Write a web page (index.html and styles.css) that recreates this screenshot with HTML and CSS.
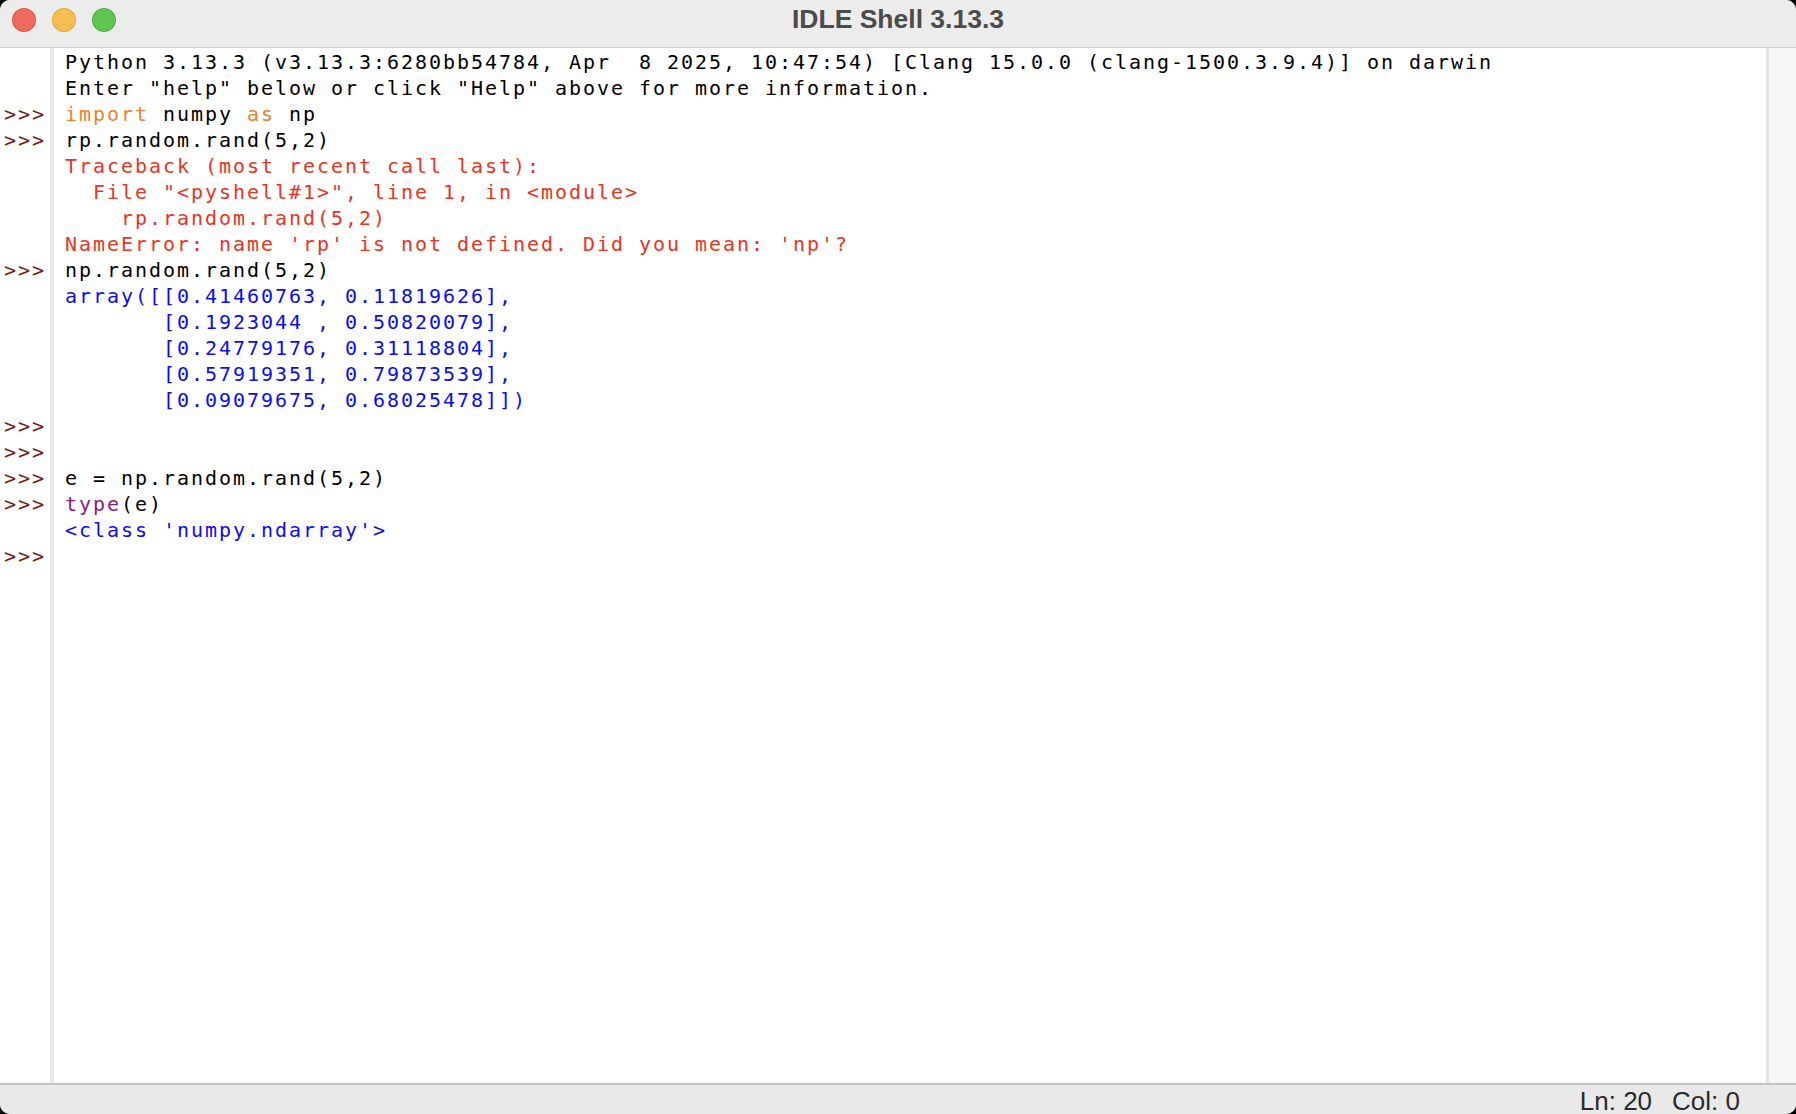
FILE: index.html
```html
<html lang="en">
	<head>
		<meta charset="UTF-8" />
		<title>IDLE Shell 3.13.3</title>
		<link rel="stylesheet" href="styles.css">
	</head>

	<body>
		<div class="window">
			<div class="titlebar">
				<div class="lights">
					<span class="light red"></span>
					<span class="light yellow"></span>
					<span class="light green"></span>
				</div>
				<div class="title">IDLE Shell 3.13.3</div>
				<div></div>
			</div>

			<div class="main">
				<div class="gutter">
					<div class="line"></div>
					<div class="line"></div>
					<div class="line">&gt;&gt;&gt;</div>
					<div class="line">&gt;&gt;&gt;</div>
					<div class="line"></div>
					<div class="line"></div>
					<div class="line"></div>
					<div class="line"></div>
					<div class="line">&gt;&gt;&gt;</div>
					<div class="line"></div>
					<div class="line"></div>
					<div class="line"></div>
					<div class="line"></div>
					<div class="line"></div>
					<div class="line">&gt;&gt;&gt;</div>
					<div class="line">&gt;&gt;&gt;</div>
					<div class="line">&gt;&gt;&gt;</div>
					<div class="line">&gt;&gt;&gt;</div>
					<div class="line"></div>
					<div class="line">&gt;&gt;&gt;</div>
				</div>

				<div class="code">
					<div class="line">Python 3.13.3 (v3.13.3:6280bb54784, Apr  8 2025, 10:47:54) [Clang 15.0.0 (clang-1500.3.9.4)] on darwin</div>
					<div class="line">Enter "help" below or click "Help" above for more information.</div>
					<div class="line"><span class="kw">import</span> numpy <span class="kw">as</span> np</div>
					<div class="line">rp.random.rand(5,2)</div>
					<div class="line err">Traceback (most recent call last):</div>
					<div class="line err">  File "&lt;pyshell#1&gt;", line 1, in &lt;module&gt;</div>
					<div class="line err">    rp.random.rand(5,2)</div>
					<div class="line err">NameError: name 'rp' is not defined. Did you mean: 'np'?</div>
					<div class="line">np.random.rand(5,2)</div>
					<div class="line out">array([[0.41460763, 0.11819626],</div>
					<div class="line out">       [0.1923044 , 0.50820079],</div>
					<div class="line out">       [0.24779176, 0.31118804],</div>
					<div class="line out">       [0.57919351, 0.79873539],</div>
					<div class="line out">       [0.09079675, 0.68025478]])</div>
					<div class="line"></div>
					<div class="line"></div>
					<div class="line">e = np.random.rand(5,2)</div>
					<div class="line"><span class="builtin">type</span>(e)</div>
					<div class="line out">&lt;class 'numpy.ndarray'&gt;</div>
					<div class="line"></div>
				</div>

				<div class="scrollbar"></div>
			</div>

			<div class="status">
				<span>Ln: 20</span>
				<span>Col: 0</span>
			</div>
		</div>
	</body>
</html>
```

FILE: styles.css
```css
html {
	background: #000;
}

body {
	margin: 0;
	padding: 0;
	height: 100vh;
	overflow: hidden;
}

.window {
	display: flex;
	flex-direction: column;
	height: 100%;
	background: #fff;
	border-radius: 10px;
	overflow: hidden;
}

.titlebar {
	display: grid;
	grid-template-columns: 1fr auto 1fr;
	align-items: center;
	height: 47px;
	flex-shrink: 0;
	background: #ececec;
	border-bottom: 1px solid #d4d4d4;
}

.lights {
	display: flex;
	gap: 16px;
	padding-left: 12px;
	margin-top: -7px;
}

.light {
	width: 22px;
	height: 22px;
	border-radius: 50%;
	border: 1px solid rgba(0, 0, 0, 0.12);
}

.red {
	background: #ee6a5f;
}

.yellow {
	background: #f5bf4f;
}

.green {
	background: #61c554;
}

.title {
	font-family: 'Liberation Sans', Arial, sans-serif;
	font-weight: bold;
	font-size: 26.5px;
	color: #4b4b4b;
	margin-top: -8px;
}

.main {
	display: flex;
	flex: 1;
	min-height: 0;
	font-family: 'DejaVu Sans Mono', monospace;
	font-size: 20px;
	letter-spacing: 1.96px;
	line-height: 26px;
}

.gutter {
	width: 46px;
	padding-left: 4px;
	padding-top: 1px;
	border-right: 4px solid #e8e8e8;
	color: #7a1a12;
	flex-shrink: 0;
}

.code {
	flex: 1;
	padding-left: 11px;
	padding-top: 1px;
	color: #000;
	overflow: hidden;
}

.line {
	height: 26px;
	white-space: pre;
}

.kw {
	color: #f0802f;
}

.builtin {
	color: #8a1a88;
}

.err {
	color: #ea3323;
}

.out {
	color: #0b0bf5;
}

.scrollbar {
	width: 27px;
	flex-shrink: 0;
	background: #f7f7f7;
	border-left: 3px solid #e5e5e5;
}

.status {
	display: flex;
	justify-content: flex-end;
	gap: 20px;
	flex-shrink: 0;
	padding-right: 56px;
	padding-top: 4px;
	box-sizing: border-box;
	height: 31px;
	background: #e9e9e9;
	border-top: 2px solid #c3c3c3;
	font-family: 'Liberation Sans', Arial, sans-serif;
	font-size: 26px;
	line-height: 25px;
	color: #2b2b2b;
	overflow: hidden;
}
```
